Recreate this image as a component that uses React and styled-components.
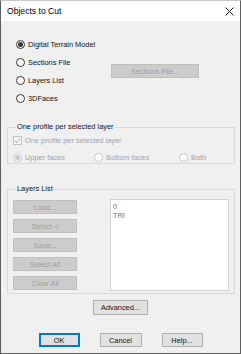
import React from 'react';
import styled, { createGlobalStyle } from 'styled-components';

const GlobalStyle = createGlobalStyle`
  html, body {
    margin: 0;
    padding: 0;
    background: #ffffff;
  }
  body {
    font-family: "Liberation Sans", Arial, sans-serif;
  }
`;

const Window = styled.div`
  width: 241px;
  height: 354px;
  box-sizing: border-box;
  border: 1px solid #5e5e5e;
  border-top-color: #c8c8c8;
  background: #f0f0f0;
  display: flex;
  flex-direction: column;
  font-size: 7.4px;
  color: #111;
`;

const TitleBar = styled.div`
  height: 20px;
  background: #ffffff;
  display: flex;
  align-items: center;
  justify-content: space-between;
  padding: 0 6px 0 6px;
  font-size: 8.6px;
  color: #000;
`;

const Body = styled.div`
  flex: 1;
  display: flex;
  flex-direction: column;
  padding: 14px 5px 0 6px;
`;

const SourceGrid = styled.div`
  display: grid;
  grid-template-columns: 95px 88px;
  grid-template-rows: repeat(4, 18px);
  padding-left: 9px;
`;

const Option = styled.label`
  display: flex;
  align-items: center;
  gap: 3px;
  white-space: nowrap;
  color: ${p => (p.disabled ? '#a3a3a3' : '#111')};
`;

const RadioDot = styled.span`
  box-sizing: border-box;
  width: 9px;
  height: 9px;
  border-radius: 50%;
  border: 1px solid ${p => (p.disabled ? '#c4c4c4' : '#333')};
  background: #fff;
  display: flex;
  align-items: center;
  justify-content: center;
  flex-shrink: 0;
  &::after {
    content: '';
    width: 5px;
    height: 5px;
    border-radius: 50%;
    background: ${p => (p.disabled ? '#c4c4c4' : '#333')};
    display: ${p => (p.checked ? 'block' : 'none')};
  }
`;

const CheckBox = styled.span`
  box-sizing: border-box;
  width: 9px;
  height: 9px;
  border: 1px solid #c4c4c4;
  background: #f7f7f7;
  display: flex;
  align-items: center;
  justify-content: center;
  flex-shrink: 0;
`;

const Button = styled.button`
  box-sizing: border-box;
  height: ${p => p.h || 14}px;
  width: ${p => p.w}px;
  padding: 0;
  font-family: inherit;
  font-size: 7.4px;
  border: 1px solid ${p => (p.disabled ? '#bfbfbf' : p.primary ? '#0078d7' : '#adadad')};
  background: ${p => (p.disabled ? '#cccccc' : '#e1e1e1')};
  color: ${p => (p.disabled ? '#9f9f9f' : '#111')};
  box-shadow: ${p => (p.primary ? 'inset 0 0 0 1px #0078d7' : 'none')};
  flex-shrink: 0;
`;

const SectionsButton = styled(Button)`
  grid-column: 2;
  grid-row: 2 / 4;
  align-self: center;
`;

const Group = styled.fieldset`
  margin: ${p => p.top}px 0 0 0;
  padding: ${p => p.pad};
  border: 1px solid #d9d9d9;
  min-width: 0;
  width: 228px;
  box-sizing: border-box;
`;

const Legend = styled.legend`
  padding: 0 1px;
  margin-left: 3px;
  line-height: 10px;
  color: #111;
`;

const ProfileRow = styled.div`
  display: flex;
  align-items: center;
  height: 10px;
  margin-top: ${p => p.top || 0}px;
`;

const FaceOption = styled(Option)`
  width: ${p => p.w}px;
`;

const LayersBody = styled.div`
  display: flex;
  justify-content: space-between;
`;

const ButtonColumn = styled.div`
  display: flex;
  flex-direction: column;
  gap: 5px;
  padding-top: 1px;
`;

const ListBox = styled.div`
  box-sizing: border-box;
  width: 119px;
  height: 92px;
  background: #fff;
  border: 1px solid #d0d0d0;
  padding: 2px 2px;
  color: #6f6f6f;
  line-height: 9px;
`;

const Centered = styled.div`
  display: flex;
  justify-content: center;
  gap: 20px;
  margin-top: ${p => p.top}px;
  padding-right: 1px;
`;

const CloseIcon = () => (
  <svg width="9" height="9" viewBox="0 0 9 9">
    <path d="M0.5 0.5 L8.5 8.5 M8.5 0.5 L0.5 8.5" stroke="#222" strokeWidth="1" />
  </svg>
);

const CheckMark = () => (
  <svg width="7" height="7" viewBox="0 0 7 7">
    <path d="M0.8 3.6 L2.7 5.5 L6.2 1.2" stroke="#bdbdbd" strokeWidth="1.1" fill="none" />
  </svg>
);

export default function App() {
  return (
    <>
      <GlobalStyle />
      <Window>
        <TitleBar>
          <span>Objects to Cut</span>
          <CloseIcon />
        </TitleBar>
        <Body>
          <SourceGrid>
            <Option><RadioDot checked />Digital Terrain Model</Option>
            <span />
            <Option><RadioDot />Sections File</Option>
            <SectionsButton w={88} disabled>Sections File...</SectionsButton>
            <Option><RadioDot />Layers List</Option>
            <Option><RadioDot />3DFaces</Option>
          </SourceGrid>

          <Group top={15} pad="0 5px 1px 5px">
            <Legend>One profile per selected layer</Legend>
            <ProfileRow top={3}>
              <Option disabled><CheckBox><CheckMark /></CheckBox>One profile per selected layer</Option>
            </ProfileRow>
            <ProfileRow top={7}>
              <FaceOption w={81} disabled><RadioDot disabled checked />Upper faces</FaceOption>
              <FaceOption w={85} disabled><RadioDot disabled />Bottom faces</FaceOption>
              <FaceOption w={40} disabled><RadioDot disabled />Both</FaceOption>
            </ProfileRow>
          </Group>

          <Group top={20} pad="5px 5px 2px 5px">
            <Legend>Layers List</Legend>
            <LayersBody>
              <ButtonColumn>
                <Button w={64} disabled>Load...</Button>
                <Button w={64} disabled>Select &lt;</Button>
                <Button w={64} disabled>Save...</Button>
                <Button w={64} disabled>Select All</Button>
                <Button w={64} disabled>Clear All</Button>
              </ButtonColumn>
              <ListBox>
                <div>0</div>
                <div>TRI</div>
              </ListBox>
            </LayersBody>
          </Group>

          <Centered top={6}>
            <Button w={55} h={15}>Advanced...</Button>
          </Centered>
          <Centered top={18}>
            <Button w={41} primary>OK</Button>
            <Button w={42}>Cancel</Button>
            <Button w={41}>Help...</Button>
          </Centered>
        </Body>
      </Window>
    </>
  );
}
